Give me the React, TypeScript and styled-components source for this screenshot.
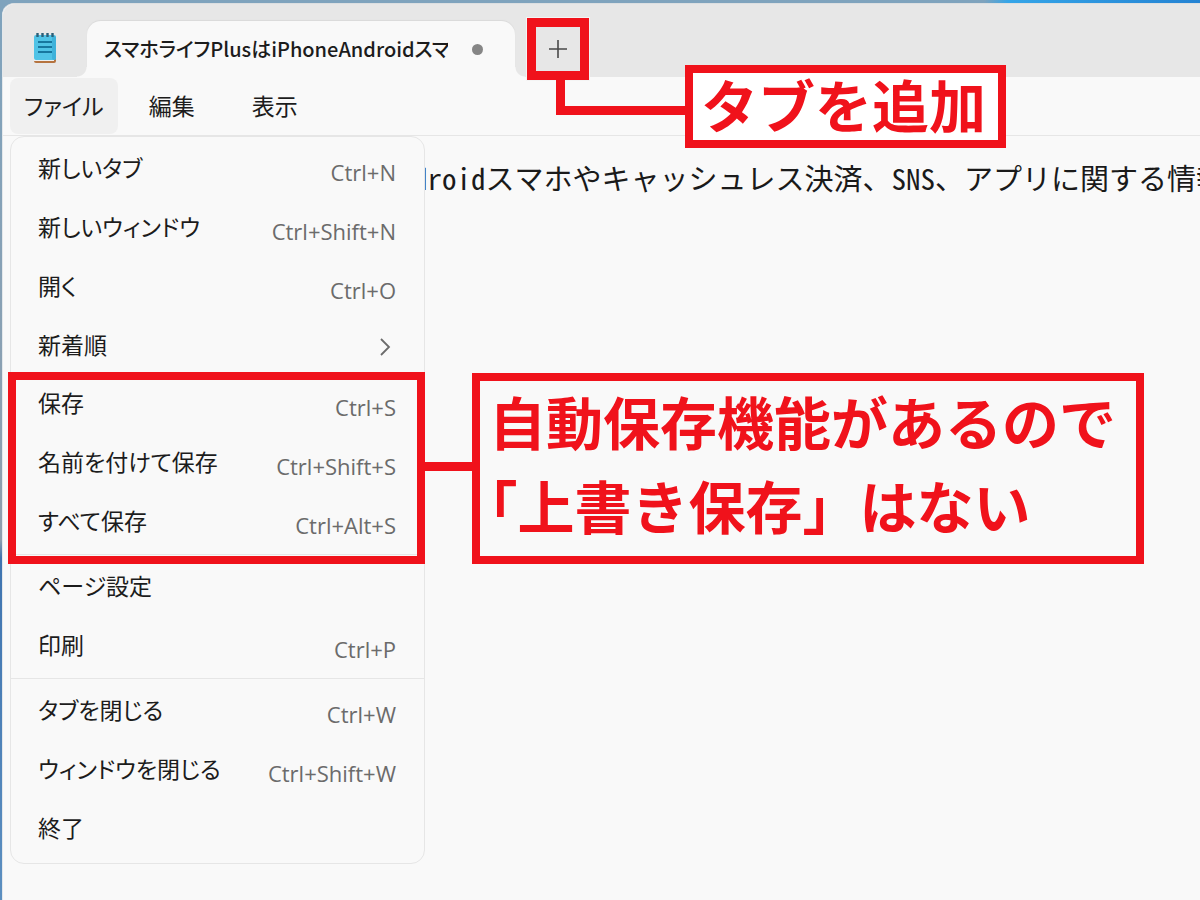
import React from "react";
import styled, { createGlobalStyle, css } from "styled-components";

const RED = "#f0121b";
const UI_FONT = '"Open Sans", "Noto Sans CJK JP", sans-serif';
const JP_FONT = '"Noto Sans CJK JP", sans-serif';

const GlobalStyle = createGlobalStyle`
  *, *::before, *::after { box-sizing: border-box; }
  body { margin: 0; overflow: hidden; }
  button { font: inherit; color: inherit; border: 0; padding: 0; background: none; text-align: left; }
`;

const Desktop = styled.div`
  min-height: 100vh;
  padding: 3px 0 0 2px;
  display: flex;
  background:
    linear-gradient(90deg, transparent 82%, #35a5e8 84%, #2483d3 100%) top / 100% 3px no-repeat,
    linear-gradient(180deg, #7fa3bd 0%, #8f9fae 60%, #3f74b0 62%, #5c8fc0 100%);
`;

const AppWindow = styled.main`
  flex: 1;
  min-width: 0;
  display: flex;
  flex-direction: column;
  border-top: 1px solid #dcdfe1;
  border-left: 1px solid #e4e8eb;
  border-top-left-radius: 12px;
  background: #f9f9f9;
  font-family: ${UI_FONT};
  color: #1c1c1c;
`;

const TabStrip = styled.header`
  display: flex;
  align-items: flex-end;
  height: 73px;
  background: #e7e7e7;
  border-top-left-radius: 12px;
`;

const AppIcon = styled.svg`
  width: 24px;
  height: 32px;
  margin: 0 30px 13px;
`;

const Tab = styled.div`
  position: relative;
  display: flex;
  align-items: center;
  width: 428px;
  height: 56px;
  padding: 0 32px 0 17px;
  background: #f9f9f9;
  border-radius: 14px 14px 0 0;
  box-shadow: 0 -1px 1px #dadada;

  &::before,
  &::after {
    content: "";
    position: absolute;
    bottom: 0;
    width: 10px;
    height: 10px;
  }
  &::before {
    right: 100%;
    background: radial-gradient(circle at 0 0, #e7e7e7 9px, #f9f9f9 10px);
  }
  &::after {
    left: 100%;
    background: radial-gradient(circle at 100% 0, #e7e7e7 9px, #f9f9f9 10px);
  }
`;

const TabTitle = styled.span`
  flex: 1;
  overflow: hidden;
  white-space: nowrap;
  font-family: ${JP_FONT};
  font-size: 20px;
  font-weight: 500;
  line-height: 32px;
  font-feature-settings: "palt";
`;

const UnsavedDot = styled.span`
  width: 11px;
  height: 11px;
  margin-left: 24px;
  border-radius: 50%;
  background: #868686;
`;

const AddTab = styled.div`
  position: relative;
  width: 62px;
  height: 62px;
  margin: 0 0 -3px 12px;
`;

const AddButton = styled.button`
  display: flex;
  align-items: center;
  justify-content: center;
  width: 100%;
  height: 100%;
  border: 9px solid ${RED};
  outline: 1px solid #f4f4f4;
  background: #e7e7e7;
`;

const ElbowLine = styled.span`
  position: absolute;
  top: 62px;
  left: 29px;
  width: 130px;
  height: 35px;
  border: solid ${RED};
  border-width: 0 0 9px 9px;
`;

const Callout = styled.p`
  position: absolute;
  z-index: 3;
  margin: 0;
  border: 8px solid ${RED};
  color: ${RED};
  font-family: ${JP_FONT};
  font-size: 57px;
  font-weight: 700;
  font-feature-settings: normal;
  white-space: nowrap;
  text-spacing-trim: trim-start;

  span {
    display: block;
    margin: -3px 0 3px;
  }
`;

const AddCallout = styled(Callout)`
  top: 47px;
  left: 158px;
  padding: 0 12px 0 8px;
  line-height: 67px;
  background: #fff;
`;

const SaveCallout = styled(Callout)`
  top: -2px;
  left: 461px;
  width: 672px;
  padding: 0 0 7px 9px;
  line-height: 84px;
  background: #f9f9f9;
`;

const MenuBar = styled.nav`
  position: relative;
  display: flex;
  align-items: center;
  gap: 5px;
  height: 59px;
  padding: 0 7px;
  border-bottom: 1px solid #e6e6e6;
  font-size: 23px;
  line-height: 36px;
  font-feature-settings: "palt";
`;

const MenuBarButton = styled.button<{ $open?: boolean }>`
  min-width: 98px;
  height: 56px;
  padding: 0 14px;
  border-radius: 8px;
  text-align: center;
  background: ${(p) => (p.$open ? "#f0f0f0" : "transparent")};
`;

const MenuPanel = styled.div`
  position: absolute;
  z-index: 2;
  top: 59px;
  left: 7px;
  width: 415px;
  padding: 3px 0 4px;
  border: 1px solid #e6e6e6;
  border-radius: 14px;
  background: #f9f9f9;
`;

const MenuGroup = styled.div<{ $ruled?: boolean }>`
  position: relative;
  ${(p) =>
    p.$ruled &&
    css`
      margin-top: 2px;
      padding-top: 3px;
      border-top: 1px solid #e6e6e6;
    `}
`;

const SaveGroup = styled(MenuGroup)`
  margin-top: -1px;
`;

const MenuItem = styled.button`
  display: flex;
  align-items: center;
  justify-content: space-between;
  width: 100%;
  height: 59px;
  padding: 0 28px 0 27px;
`;

const Label = styled.span`
  padding-bottom: 3px;
`;

const Shortcut = styled.span`
  padding-top: 5px;
  color: #6b6b6b;
  font-size: 22px;
  line-height: 32px;
`;

const SaveFrame = styled.span`
  position: absolute;
  z-index: 1;
  inset: -3px -1px -12px -3px;
  border: 8px solid ${RED};
  pointer-events: none;
`;

const SaveLine = styled.span`
  position: absolute;
  top: 87px;
  left: 413px;
  width: 50px;
  height: 9px;
  background: ${RED};
`;

const Document = styled.section`
  flex: 1;
  overflow: hidden;
  padding: 20px 0 0 410px;
  color: #1a1a1a;
  font-family: "Noto Sans Mono CJK JP", ${JP_FONT};
  font-size: 29px;
  line-height: 42px;
  white-space: nowrap;

  p { margin: 0; }
`;

type Item = { label: string; keys?: string; submenu?: boolean };

const openItems: Item[] = [
  { label: "新しいタブ", keys: "Ctrl+N" },
  { label: "新しいウィンドウ", keys: "Ctrl+Shift+N" },
  { label: "開く", keys: "Ctrl+O" },
  { label: "新着順", submenu: true },
];
const saveItems: Item[] = [
  { label: "保存", keys: "Ctrl+S" },
  { label: "名前を付けて保存", keys: "Ctrl+Shift+S" },
  { label: "すべて保存", keys: "Ctrl+Alt+S" },
];
const printItems: Item[] = [{ label: "ページ設定" }, { label: "印刷", keys: "Ctrl+P" }];
const closeItems: Item[] = [
  { label: "タブを閉じる", keys: "Ctrl+W" },
  { label: "ウィンドウを閉じる", keys: "Ctrl+Shift+W" },
  { label: "終了" },
];

const Chevron = () => (
  <svg width="18" height="20" viewBox="0 0 18 20" fill="none" stroke="#6b6b6b" strokeWidth="1.8">
    <path d="M3 2l8 8-8 8" />
  </svg>
);

const Items = ({ items }: { items: Item[] }) => (
  <>
    {items.map((item) => (
      <MenuItem key={item.label} type="button" role="menuitem">
        <Label>{item.label}</Label>
        {item.keys && <Shortcut>{item.keys}</Shortcut>}
        {item.submenu && <Chevron />}
      </MenuItem>
    ))}
  </>
);

const NotepadIcon = () => (
  <AppIcon viewBox="0 0 24 32" aria-hidden="true">
    <rect x="1" y="6" width="22" height="25" rx="2" fill="#b5733f" />
    <rect x="1" y="26" width="20" height="3" fill="#eef0f0" />
    <rect x="1" y="3" width="22" height="25" rx="2" fill="#50c3e6" />
    <rect x="19" y="4" width="4" height="24" rx="2" fill="#3fb2da" />
    <path d="M4.500 1v4M9.500 1v4M14.500 1v4M19.500 1v4" stroke="#2b5f78" strokeWidth="2.400" />
    <path d="M5 10h14M5 15h14M5 20h14" stroke="#17779f" strokeWidth="2" />
  </AppIcon>
);

export default function App() {
  return (
    <>
      <GlobalStyle />
      <Desktop lang="ja">
        <AppWindow>
          <TabStrip>
            <NotepadIcon />
            <Tab>
              <TabTitle>スマホライフPlusはiPhoneAndroidスマホ</TabTitle>
              <UnsavedDot />
            </Tab>
            <AddTab>
              <AddButton type="button" aria-label="タブを追加">
                <svg width="20" height="20" viewBox="0 0 20 20" stroke="#4a4a4a" strokeWidth="1.6">
                  <path d="M10 1v18M1 10h18" />
                </svg>
              </AddButton>
              <ElbowLine />
              <AddCallout>
                <span>タブを追加</span>
              </AddCallout>
            </AddTab>
          </TabStrip>
          <MenuBar>
            <MenuBarButton type="button" $open aria-expanded="true">
              ファイル
            </MenuBarButton>
            <MenuBarButton type="button">編集</MenuBarButton>
            <MenuBarButton type="button">表示</MenuBarButton>
            <MenuPanel role="menu">
              <MenuGroup>
                <Items items={openItems} />
              </MenuGroup>
              <SaveGroup>
                <Items items={saveItems} />
                <SaveFrame />
                <SaveLine />
                <SaveCallout>
                  <span>
                    自動保存機能があるので
                    <br />
                    「上書き保存」はない
                  </span>
                </SaveCallout>
              </SaveGroup>
              <MenuGroup $ruled>
                <Items items={printItems} />
              </MenuGroup>
              <MenuGroup $ruled>
                <Items items={closeItems} />
              </MenuGroup>
            </MenuPanel>
          </MenuBar>
          <Document>
            <p>droidスマホやキャッシュレス決済、SNS、アプリに関する情報</p>
          </Document>
        </AppWindow>
      </Desktop>
    </>
  );
}
